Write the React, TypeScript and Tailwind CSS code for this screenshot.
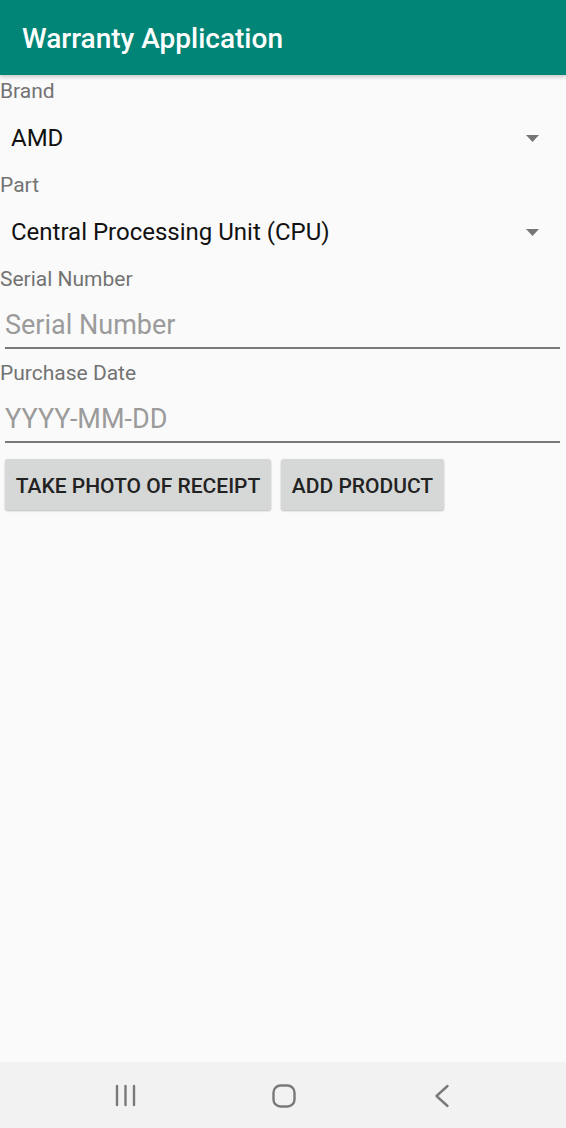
const FONT = { fontFamily: 'Roboto, "Noto Sans", sans-serif' }

function Label({ text }: { text: string }) {
  return (
    <div className="h-[32px] flex items-center text-[21px] leading-none text-[#737373]">
      {text}
    </div>
  )
}

function Spinner({ value }: { value: string }) {
  return (
    <div className="h-[62px] flex items-center justify-between pl-[11px] pr-[27px]">
      <span className="text-[24px] leading-none text-[#111]">{value}</span>
      <svg width="13" height="7" viewBox="0 0 13 7">
        <path d="M0 0h13L6.5 7z" fill="#757575" />
      </svg>
    </div>
  )
}

function Field({ placeholder }: { placeholder: string }) {
  return (
    <div className="h-[62px] px-[5px] pr-[6px] flex flex-col">
      <div className="h-[52px] flex items-center pt-[9px] text-[27px] leading-none text-[#9b9b9b]">
        {placeholder}
      </div>
      <div className="h-[2px] bg-[#7a7a7a]" />
    </div>
  )
}

function Button({ text, width }: { text: string; width: string }) {
  return (
    <button
      className={`h-[51px] ${width} rounded-[3px] bg-[#d6d7d7] shadow-[0_1px_2px_rgba(0,0,0,0.25)] text-[21px] leading-none font-medium text-[#222] flex items-center justify-center pt-[3px]`}
    >
      {text}
    </button>
  )
}

export default function App() {
  return (
    <div style={FONT} className="w-[566px] h-[1128px] bg-[#fafafa] flex flex-col">
      <div className="h-[75px] bg-[#008577] flex items-center pl-[22px] shadow-[0_2px_4px_rgba(0,0,0,0.2)] relative z-10">
        <h1 className="text-[28px] leading-none font-medium text-white pt-[2px]">Warranty Application</h1>
      </div>
      <div className="flex-1 flex flex-col">
        <Label text="Brand" />
        <Spinner value="AMD" />
        <Label text="Part" />
        <Spinner value="Central Processing Unit (CPU)" />
        <Label text="Serial Number" />
        <Field placeholder="Serial Number" />
        <Label text="Purchase Date" />
        <Field placeholder="YYYY-MM-DD" />
        <div className="flex gap-[10px] pl-[5px] mt-[8px]">
          <Button text="TAKE PHOTO OF RECEIPT" width="w-[266px]" />
          <Button text="ADD PRODUCT" width="w-[163px]" />
        </div>
      </div>
      <div className="h-[66px] bg-[#f2f2f2] flex items-center pl-[115px] pt-[1px]">
        <svg width="22" height="23" viewBox="0 0 22 23">
          <g stroke="#7a7a7a" strokeWidth="2.4" strokeLinecap="round">
            <path d="M2 2v19M10.5 2v19M19 2v19" />
          </g>
        </svg>
        <svg width="24" height="24" viewBox="0 0 24 24" className="ml-[135px]">
          <rect x="1.5" y="1.5" width="21" height="21" rx="7" fill="none" stroke="#7a7a7a" strokeWidth="2.4" />
        </svg>
        <svg width="16" height="24" viewBox="0 0 16 24" className="ml-[138px]">
          <path d="M13.5 2L2.5 12l11 10" fill="none" stroke="#7a7a7a" strokeWidth="2.4" strokeLinecap="round" strokeLinejoin="round" />
        </svg>
      </div>
    </div>
  )
}
